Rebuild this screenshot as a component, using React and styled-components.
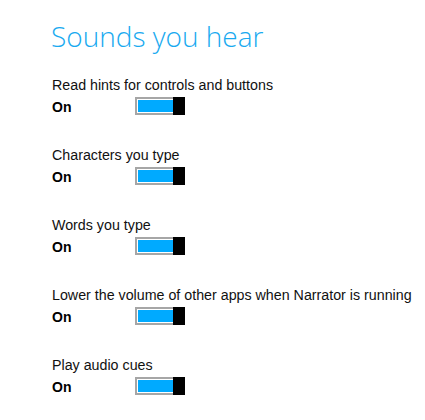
import React from "react";
import styled, { createGlobalStyle } from "styled-components";

const Global = createGlobalStyle`
  html, body { margin: 0; padding: 0; background: #ffffff; }
  body { font-family: "Liberation Sans", Arial, sans-serif; color: #000; }
`;

const Page = styled.div`
  padding: 17px 0 0 52px;
  display: flex;
  flex-direction: column;
`;

const Title = styled.h1`
  margin: 0 0 20px -1px;
  font-family: "Open Sans", "Noto Sans", sans-serif;
  font-size: 28px;
  font-weight: 300;
  color: #19aaf0;
  line-height: 38px;
  white-space: nowrap;
`;

const List = styled.div`
  display: flex;
  flex-direction: column;
  gap: 30px;
`;

const Setting = styled.div`
  display: flex;
  flex-direction: column;
  gap: 2px;
`;

const Label = styled.div`
  font-size: 14.25px;
  line-height: 20px;
  color: #111;
  white-space: nowrap;
`;

const Row = styled.div`
  display: flex;
  align-items: center;
  height: 18px;
`;

const State = styled.span`
  width: 83px;
  padding-top: 2px;
  font-size: 14px;
  line-height: 18px;
  font-weight: 700;
`;

const Switch = styled.button`
  box-sizing: border-box;
  width: 50px;
  height: 18px;
  padding: 0;
  border: 2px solid #a6a6a6;
  background: #ffffff;
  display: flex;
  position: relative;
  cursor: pointer;
`;

const Fill = styled.span`
  flex: 1;
  margin: 1px 10px 1px 1px;
  background: ${(p) => (p.$on ? "#00aaff" : "#ffffff")};
`;

const Thumb = styled.span`
  position: absolute;
  top: -2px;
  right: -2px;
  width: 12px;
  height: 18px;
  background: #000;
`;

const settings = [
  "Read hints for controls and buttons",
  "Characters you type",
  "Words you type",
  "Lower the volume of other apps when Narrator is running",
  "Play audio cues",
];

export default function App() {
  return (
    <>
      <Global />
      <Page>
        <Title>Sounds you hear</Title>
        <List>
          {settings.map((s) => (
            <Setting key={s}>
              <Label>{s}</Label>
              <Row>
                <State>On</State>
                <Switch aria-pressed="true">
                  <Fill $on />
                  <Thumb />
                </Switch>
              </Row>
            </Setting>
          ))}
        </List>
      </Page>
    </>
  );
}
